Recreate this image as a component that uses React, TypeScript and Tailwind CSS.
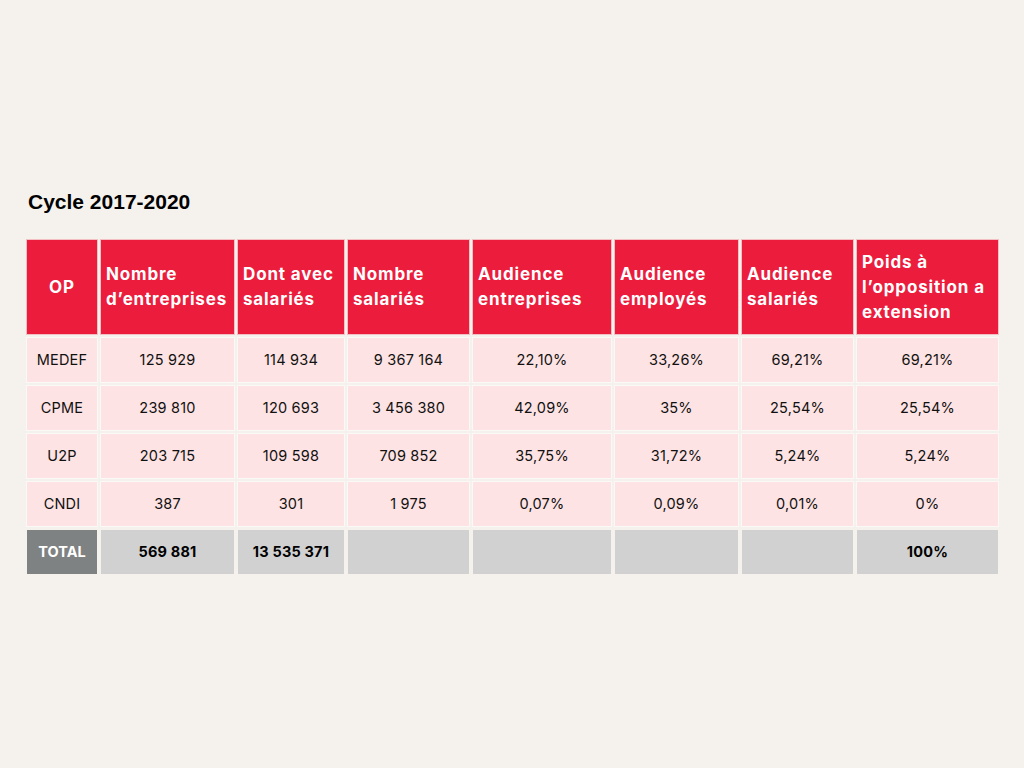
import React from "react"

const headers = [
  "OP",
  "Nombre d’entreprises",
  "Dont avec salariés",
  "Nombre salariés",
  "Audience entreprises",
  "Audience employés",
  "Audience salariés",
  "Poids à l’opposition a extension",
]

const rows = [
  ["MEDEF", "125 929", "114 934", "9 367 164", "22,10%", "33,26%", "69,21%", "69,21%"],
  ["CPME", "239 810", "120 693", "3 456 380", "42,09%", "35%", "25,54%", "25,54%"],
  ["U2P", "203 715", "109 598", "709 852", "35,75%", "31,72%", "5,24%", "5,24%"],
  ["CNDI", "387", "301", "1 975", "0,07%", "0,09%", "0,01%", "0%"],
]

const totals = ["569 881", "13 535 371", "", "", "", "", "100%"]

export default function App() {
  return (
    <div className="min-h-[768px] w-[1024px] bg-[#f5f2ee] pt-[189px] pl-[27px] font-['Inter',sans-serif]">
      <h1 className="mb-[26px] pl-[1px] font-['Liberation_Sans',Arial,sans-serif] text-[21px] font-bold leading-[25px] text-black">
        Cycle 2017-2020
      </h1>

      <div className="grid w-[970px] grid-cols-[70px_133px_106px_121px_138px_123px_111px_141px] grid-rows-[94px_44px_44px_44px_44px_44px] gap-[4px]">
        {/* Header */}
        {headers.map((h, i) => (
          <div
            key={h}
            className={
              "flex items-center bg-[#ec1c3c] text-[17px] font-bold leading-[25px] tracking-[0.85px] text-white outline outline-1 outline-[#f0737f]/40 " +
              (i === 0 ? "justify-center" : "px-[5px]")
            }
          >
            {h}
          </div>
        ))}

        {/* Rows */}
        {rows.map((r) =>
          r.map((c, j) => (
            <div
              key={r[0] + j}
              className="flex items-center justify-center bg-[#fde3e3] text-[14.5px] leading-none tracking-[0.2px] text-[#111] outline outline-1 outline-white/50"
            >
              {c}
            </div>
          ))
        )}

        {/* Total */}
        <div className="flex items-center justify-center bg-[#7f8282] text-[14.5px] font-bold text-white">
          TOTAL
        </div>
        {totals.map((t, i) => (
          <div
            key={"t" + i}
            className="flex items-center justify-center bg-[#d1d1d1] text-[14.5px] font-bold tracking-[0.2px] text-black"
          >
            {t}
          </div>
        ))}
      </div>
    </div>
  )
}
